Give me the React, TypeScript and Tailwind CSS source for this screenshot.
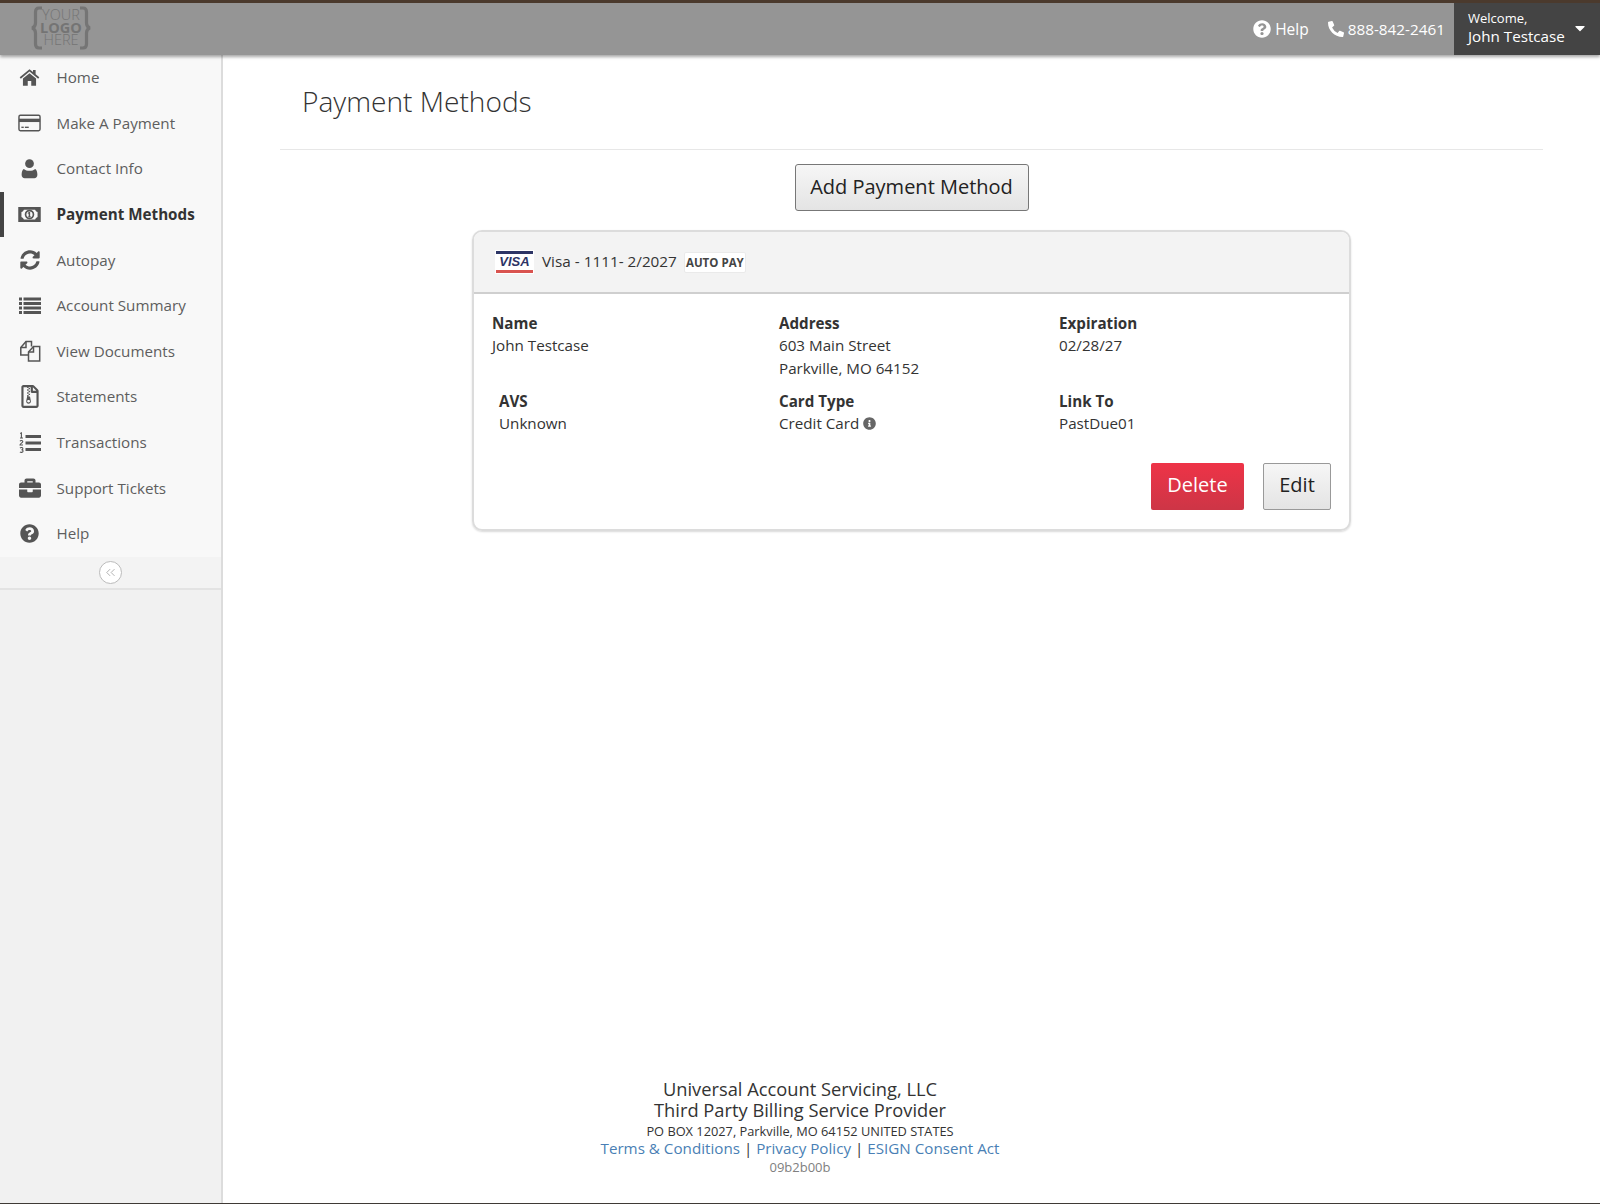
import React from 'react';
import {
  FaSyncAlt,
  FaBriefcase,
  FaQuestionCircle,
  FaPhoneAlt,
  FaInfoCircle,
  FaCaretDown,
  FaRegFileArchive,
} from 'react-icons/fa';
import { ChevronsLeft } from 'lucide-react';

const HomeIcon = () => (
  <svg viewBox="0 0 24 24" className="w-[21px] h-[21px] fill-current">
    <path d="M12 2.500 .8 11.800l1.300 1.600L12 5.200l9.900 8.200 1.300-1.600-4.200-3.500V3.500h-3v2.300L12 2.500z" />
    <path d="M12 7 4.500 13.200V21.500H10v-5.500h4v5.500h5.500V13.200L12 7z" />
  </svg>
);

const CardIcon = () => (
  <svg viewBox="0 0 24 18" className="w-[23px] h-[18px]">
    <rect x="1" y="1" width="22" height="16" rx="1.500" className="fill-none stroke-current" strokeWidth="1.500" />
    <rect x="1" y="4.500" width="22" height="3.500" className="fill-current" />
    <rect x="3.500" y="12.800" width="2.500" height="1.400" className="fill-current" />
    <rect x="7.200" y="12.800" width="4" height="1.400" className="fill-current" />
  </svg>
);

const UserIcon = () => (
  <svg viewBox="0 0 24 24" className="w-[21px] h-[21px] fill-current">
    <circle cx="12" cy="6.500" r="5" />
    <path d="M5.500 12.500c1.600 1.500 3.900 2.200 6.500 2.200s4.900-.7 6.500-2.200c1.500 1 2.500 3.300 2.500 6.500 0 2.500-1.500 4-3.500 4H6.500C4.500 23 3 21.500 3 19c0-3.200 1-5.500 2.500-6.500z" />
  </svg>
);

const MoneyIcon = () => (
  <svg viewBox="0 0 24 16" className="w-[23px] h-[15px]">
    <path
      fillRule="evenodd"
      className="fill-current"
      d="M0 0h24v16H0V0zm6 2.800C5.600 4 4.600 5 3.400 5.400v5.200c1.200.4 2.200 1.400 2.600 2.600h12c.4-1.200 1.400-2.200 2.600-2.600V5.400C19.400 5 18.400 4 18 2.800H6z"
    />
    <circle cx="12" cy="8" r="4.200" className="fill-none stroke-current" strokeWidth="1.800" />
    <path className="fill-current" d="M11.400 5.300 9.900 6.400l.5.800.7-.4v3.300h-1v.9h3.600v-.9h-1V5.300h-1.300z" />
  </svg>
);

const ListIcon = () => (
  <svg viewBox="0 0 22 18" className="w-[22px] h-[18px] fill-current">
    <rect x="0" y="0.500" width="3" height="3" />
    <rect x="4.500" y="0.500" width="17.500" height="3" />
    <rect x="0" y="5" width="3" height="3" />
    <rect x="4.500" y="5" width="17.500" height="3" />
    <rect x="0" y="9.500" width="3" height="3" />
    <rect x="4.500" y="9.500" width="17.500" height="3" />
    <rect x="0" y="14" width="3" height="3" />
    <rect x="4.500" y="14" width="17.500" height="3" />
  </svg>
);

const NumberedListIcon = () => (
  <svg viewBox="0 0 22 22" className="w-[22px] h-[22px]">
    <rect x="6.500" y="3" width="15.500" height="3" className="fill-current" />
    <rect x="6.500" y="9.500" width="15.500" height="3" className="fill-current" />
    <rect x="6.500" y="16" width="15.500" height="3" className="fill-current" />
    <g className="fill-none stroke-current" strokeWidth="1.100">
      <path d="M1.200 1.600 2.400 1v5M1 6h3" />
      <path d="M1 9.200c.5-1 2.800-1 2.800.4 0 1.200-2.800 2-2.800 3.400h3" />
      <path d="M1 16c.8-.8 2.900-.6 2.900.7 0 .8-.8 1.100-1.500 1.100.8 0 1.700.4 1.700 1.300 0 1.500-2.400 1.600-3.100.7" />
    </g>
  </svg>
);

const FilesIcon = () => (
  <svg viewBox="0 0 22 22" className="w-[22px] h-[22px] fill-none stroke-current" strokeWidth="1.500">
    <path d="M9 15H1.800V7.500L7 1.500h5.500v5" />
    <path d="M7 1.500V7.500H1.800" />
    <path d="M9.500 21V12l5-5.500h6.200V21H9.500z" />
    <path d="M14.500 6.500V12h-5" />
  </svg>
);

const Logo = () => (
  <div className="relative w-[62px] h-[44px] text-[#747474]">
    <svg viewBox="0 0 62 44" className="w-[62px] h-[44px] fill-none stroke-[#757575]" strokeWidth="3.200">
      <path d="M12 2H9C6.500 2 5.500 3.500 5.500 6v11c0 3-1.500 4.500-3.500 5 2 .5 3.500 2 3.500 5v11c0 2.500 1 4 3.500 4h3" />
      <path d="M50 2h3c2.500 0 3.500 1.500 3.500 4v11c0 3 1.500 4.500 3.500 5-2 .5-3.500 2-3.500 5v11c0 2.500-1 4-3.500 4h-3" />
    </svg>
    <div className="absolute inset-0 flex flex-col items-center justify-center text-[14.500px] leading-[12.500px] font-light">
      <span>YOUR</span>
      <span className="font-bold">LOGO</span>
      <span>HERE</span>
    </div>
  </div>
);

const navItems = [
  { label: 'Home', icon: <HomeIcon /> },
  { label: 'Make A Payment', icon: <CardIcon /> },
  { label: 'Contact Info', icon: <UserIcon /> },
  { label: 'Payment Methods', icon: <MoneyIcon />, active: true },
  { label: 'Autopay', icon: <FaSyncAlt className="w-[20px] h-[20px]" /> },
  { label: 'Account Summary', icon: <ListIcon /> },
  { label: 'View Documents', icon: <FilesIcon /> },
  { label: 'Statements', icon: <FaRegFileArchive className="w-[20px] h-[23px]" /> },
  { label: 'Transactions', icon: <NumberedListIcon /> },
  { label: 'Support Tickets', icon: <FaBriefcase className="w-[22px] h-[22px]" /> },
  { label: 'Help', icon: <FaQuestionCircle className="w-[19px] h-[19px]" /> },
];

const Field = ({ label, children, className = '' }: { label: string; children: React.ReactNode; className?: string }) => (
  <div className={className}>
    <div className="font-bold -mb-px">{label}</div>
    {children}
  </div>
);

export default function App() {
  return (
    <div className="w-full h-screen flex flex-col border-b border-[#3f3a36] bg-white text-[#333] font-['Open_Sans',sans-serif] text-[15.200px] leading-[23px]">
      <header className="relative z-10 h-[55px] shrink-0 flex items-stretch border-t-[3px] border-[#4b3a2d] bg-[#959595] shadow-[0_2px_3px_rgba(0,0,0,0.35)] text-white">
        <div className="pl-[30px] pt-[3px]">
          <Logo />
        </div>
        <div className="ml-auto flex items-center gap-[4px] pr-[9px]">
          <FaQuestionCircle className="w-[18px] h-[18px]" />
          <span className="text-[15.500px]">Help</span>
          <FaPhoneAlt className="w-[16px] h-[16px] ml-[15px]" />
          <span className="text-[15.300px]">888-842-2461</span>
        </div>
        <div className="w-[146px] flex items-center bg-[#444] pl-[14px] relative">
          <div className="-mt-[3px]">
            <div className="text-[13px] leading-[16px]">Welcome,</div>
            <div className="text-[15.200px] leading-[20px]">John Testcase</div>
          </div>
          <FaCaretDown className="absolute right-[12px] top-[17px] w-[16px] h-[16px]" />
        </div>
      </header>

      <div className="flex-1 min-h-0 flex">
        <aside className="w-[223px] shrink-0 flex flex-col bg-[#f1f1f1] border-r-2 border-[#dcdcdc]">
          <nav className="flex flex-col bg-[#f8f8f8]">
            {navItems.map((item) => (
              <div
                key={item.label}
                className={
                  item.active
                    ? 'h-[45.600px] flex items-center border-l-4 border-[#444] text-[#333] font-bold'
                    : 'h-[45.600px] flex items-center border-l-4 border-transparent text-[#5e5e5e]'
                }
              >
                <span className="w-[53px] -ml-px flex justify-center text-[#555]">{item.icon}</span>
                <span className="ml-[0.500px]">{item.label}</span>
              </div>
            ))}
          </nav>
          <div className="h-[33px] flex items-center justify-center bg-[#f3f3f3] border-b-2 border-[#e3e3e3]">
            <div className="w-[23px] h-[23px] flex items-center justify-center rounded-full border border-[#bbb] bg-white text-[#999]">
              <ChevronsLeft className="w-[15px] h-[15px]" strokeWidth={1.200} />
            </div>
          </div>
        </aside>

        <main className="flex-1 min-w-0 flex flex-col">
          <div className="mx-[57px] mt-[24px] h-[71px] pl-[22px] border-b border-[#e7e7e7]">
            <h1 className="text-[28.100px] leading-[44px] font-light text-[#333]">Payment Methods</h1>
          </div>

          <div className="flex justify-center mt-[14px]">
            <button className="h-[47px] w-[234px] pb-[3px] rounded-[3px] border border-[#777] bg-gradient-to-b from-[#f6f6f6] to-[#e4e4e4] text-[20px] text-[#222]">
              Add Payment Method
            </button>
          </div>

          <section className="mt-[19px] mx-auto w-[879px] rounded-[10px] border-2 border-[#dcdcdc] shadow-[0_1px_2px_rgba(0,0,0,0.15)] overflow-hidden">
            <div className="h-[62px] flex items-center pl-[21px] bg-[#f3f3f3] border-b-2 border-[#cfcfcf]">
              <div className="w-[39px] h-[24px] flex flex-col justify-between bg-white px-[1px] py-[1px]">
                <div className="h-[3px] bg-[#2d3566]" />
                <span className="text-center text-[13px] leading-[14px] font-bold italic text-[#2d3566] font-['Liberation_Sans',sans-serif]">VISA</span>
                <div className="h-[3px] bg-[#d9534f]" />
              </div>
              <span className="ml-[8px] -mt-[2px] text-[15.300px]">Visa - 1111- 2/2027</span>
              <span className="ml-[7px] h-[21px] w-[62px] flex items-center justify-center rounded-[2px] bg-white border border-[#eaeaea] text-[11.500px] font-bold text-[#444]">
                AUTO PAY
              </span>
            </div>

            <div className="px-[18px] pt-[18px] pb-[19px]">
              <div className="grid grid-cols-[287px_280px_1fr] gap-y-[10px]">
                <Field label="Name">
                  <div>John Testcase</div>
                </Field>
                <Field label="Address">
                  <div>603 Main Street</div>
                  <div>Parkville, MO 64152</div>
                </Field>
                <Field label="Expiration">
                  <div>02/28/27</div>
                </Field>
                <Field label="AVS" className="pl-[7px]">
                  <div>Unknown</div>
                </Field>
                <Field label="Card Type">
                  <div className="flex items-center gap-[4px]">
                    Credit Card
                    <FaInfoCircle className="w-[13px] h-[13px] text-[#666]" />
                  </div>
                </Field>
                <Field label="Link To">
                  <div>PastDue01</div>
                </Field>
              </div>
              <div className="mt-[28px] flex justify-end gap-[19px]">
                <button className="h-[47px] w-[93px] pb-[4px] rounded-[2px] bg-gradient-to-b from-[#ee3347] to-[#cd3546] text-[20px] text-white">
                  Delete
                </button>
                <button className="h-[47px] w-[68px] pb-[4px] rounded-[2px] border border-[#999] bg-gradient-to-b from-[#f6f6f6] to-[#e4e4e4] text-[20px] text-[#222]">
                  Edit
                </button>
              </div>
            </div>
          </section>

          <footer className="mt-auto -ml-[223px] pb-[26px] text-center">
            <div className="text-[18.300px] leading-[20.500px]">Universal Account Servicing, LLC</div>
            <div className="text-[18.300px] leading-[20.500px]">Third Party Billing Service Provider</div>
            <div className="mt-[0.500px] text-[12.800px] leading-[20px]">PO BOX 12027, Parkville, MO 64152 UNITED STATES</div>
            <div className="-mt-[1.500px] text-[15.200px] leading-[18px]">
              <a className="text-[#4a7fb5]">Terms &amp; Conditions</a>
              <span> | </span>
              <a className="text-[#4a7fb5]">Privacy Policy</a>
              <span> | </span>
              <a className="text-[#4a7fb5]">ESIGN Consent Act</a>
            </div>
            <div className="text-[13px] leading-[20px] text-[#808080]">09b2b00b</div>
          </footer>
        </main>
      </div>
    </div>
  );
}
